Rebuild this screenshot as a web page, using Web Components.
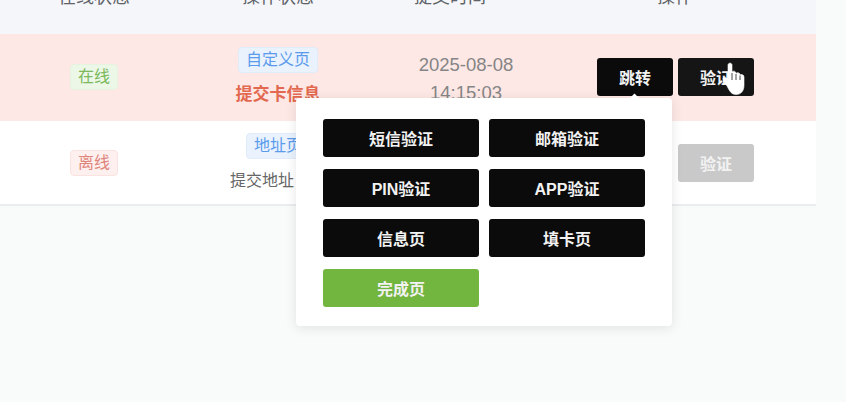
<!DOCTYPE html>
<html>
<head>
<meta charset="utf-8">
<title>list</title>
<style>
html, body { margin: 0; height: 100%; overflow: hidden; background: #f9fafa; }
body { font-family: "Liberation Sans", "Noto Sans CJK SC", sans-serif; font-size: 16px; color: #666; }
</style>
</head>
<body>
<order-page>
  <table-head></table-head>
  <table-row tone="active" status="在线" status-tone="on" page="自定义页" action="提交卡信息" action-tone="alert" date="2025-08-08" time="14:15:03">
    <action-btn>跳转</action-btn>
    <action-btn tone="soft">验证</action-btn>
  </table-row>
  <table-row status="离线" status-tone="off" page="地址页" action="提交地址　　">
    <action-btn tone="muted" tucked>跳转</action-btn>
    <action-btn tone="muted">验证</action-btn>
  </table-row>
</order-page>
<jump-popover>
  <action-btn wide>短信验证</action-btn>
  <action-btn wide>邮箱验证</action-btn>
  <action-btn wide>PIN验证</action-btn>
  <action-btn wide>APP验证</action-btn>
  <action-btn wide>信息页</action-btn>
  <action-btn wide>填卡页</action-btn>
  <action-btn wide tone="green">完成页</action-btn>
</jump-popover>
<hand-cursor></hand-cursor>
<script>
class OrderPage extends HTMLElement {
  constructor() {
    super();
    this.attachShadow({ mode: 'open' }).innerHTML = `
    <style>
    :host { display: block; width: 816px; background: #fff; margin-top: -10px; }
    </style>
    <slot></slot>`;
  }
}

const COLS = 'grid-template-columns: 188px 180px 192px 256px;';

class TableHead extends HTMLElement {
  constructor() {
    super();
    this.attachShadow({ mode: 'open' }).innerHTML = `
    <style>
    :host { display: grid; ${COLS} height: 44px; background: #f4f6f9; color: #5f6368; font-size: 18px; }
    div { text-align: center; line-height: 14px; }
    .last { padding-right: 26px; }
    .time { position: relative; left: -14px; }
    </style>
    <div>在线状态</div><div>操作状态</div><div class="time">提交时间</div><div class="last">操作</div>`;
  }
}

class TableRow extends HTMLElement {
  constructor() {
    super();
    const a = n => this.getAttribute(n) || '';
    const when = a('date') ? `${a('date')}<br>${a('time')}` : '';
    this.attachShadow({ mode: 'open' }).innerHTML = `
    <style>
    :host { display: grid; ${COLS} align-items: center; background: #fff; border-top: 1px solid #fbe9e7; border-bottom: 2px solid #eaedf0; height: 83px; }
    :host([tone="active"]) { background: #fde8e6; height: 86px; border: 0; }
    .cell { display: flex; flex-direction: column; align-items: center; justify-content: center; }
    .tag { display: block; line-height: 24px; padding: 0 7px; border-radius: 4px; border: 1px solid; }
    .on { color: #7cb95c; background: #edf7e8; border-color: #e6f3df; }
    .off { color: #e0857c; background: #fdf0ee; border-color: #fae3e0; }
    .page { color: #5b9bec; background: #e9f2fd; border-color: #e1ecfb; }
    .action { margin-top: 10px; line-height: 24px; color: #666; }
    .alert { color: #e2694f; font-size: 17px; font-weight: bold; }
    .when { text-align: center; color: #858585; font-size: 18.500px; line-height: 28px; padding-left: 4px; padding-top: 3px; }
    .btns { display: flex; gap: 5px; padding-left: 37px; }
    </style>
    <div class="cell"><span class="tag ${a('status-tone')}">${a('status')}</span></div>
    <div class="cell"><span class="tag page">${a('page')}</span><span class="action ${a('action-tone')}">${a('action')}</span></div>
    <div class="when">${when}</div>
    <div class="btns"><slot></slot></div>`;
  }
}

class ActionBtn extends HTMLElement {
  constructor() {
    super();
    this.attachShadow({ mode: 'open' }).innerHTML = `
    <style>
    :host { display: flex; align-items: center; justify-content: center; box-sizing: border-box; width: 76px; height: 38px; border-radius: 3px; background: #0b0b0b; color: #f2f2f2; font-size: 16px; font-weight: bold; }
    :host([wide]) { width: auto; }
    :host([tucked]) { width: 74px; margin-right: 2px; }
    :host([tone="soft"]) { background: #151515; }
    :host([tone="muted"]) { background: #c9c9c9; }
    :host([tone="green"]) { background: #72b53f; }
    </style>
    <slot></slot>`;
  }
}

class JumpPopover extends HTMLElement {
  constructor() {
    super();
    this.attachShadow({ mode: 'open' }).innerHTML = `
    <style>
    :host { position: absolute; left: 296px; top: 98px; width: 376px; box-sizing: border-box; padding: 21px 27px 19px; background: #fff; border-radius: 4px; box-shadow: 0 2px 12px rgba(0,0,0,.1); display: grid; grid-template-columns: 156px 156px; column-gap: 10px; row-gap: 12px; }
    .arrow { position: absolute; left: 335px; top: -3px; width: 7px; height: 7px; background: #fff; transform: rotate(45deg); }
    </style>
    <div class="arrow"></div>
    <slot></slot>`;
  }
}

class HandCursor extends HTMLElement {
  constructor() {
    super();
    this.attachShadow({ mode: 'open' }).innerHTML = `
    <style>
    :host { position: absolute; left: 719px; top: 61px; width: 26px; height: 34px; display: block; }
    svg { display: block; }
    </style>
    <svg width="26" height="34" viewBox="0 0 26 34">
      <path d="M8 25 L4.500 19.500 C3 17 5.500 15 7.500 17 L9 18.500 L9 4 C9 1.500 13 1.500 13 4 L13 11 C14 9.500 17 10 17 12.500 C18 11 21 11.500 21 14 C22 13 25 13.500 25 16 L25 24 C25 30 22 33.500 17 33.500 C12.500 33.500 10.500 30 8 25 Z" fill="#fff" stroke="#fff" stroke-width=".6" stroke-linejoin="round"/>
      <path d="M13 12 V19 M17 13 V19 M21 14.500 V19" stroke="#333" stroke-width=".9" fill="none"/>
    </svg>`;
  }
}

customElements.define('order-page', OrderPage);
customElements.define('table-head', TableHead);
customElements.define('table-row', TableRow);
customElements.define('action-btn', ActionBtn);
customElements.define('jump-popover', JumpPopover);
customElements.define('hand-cursor', HandCursor);
</script>
</body>
</html>
